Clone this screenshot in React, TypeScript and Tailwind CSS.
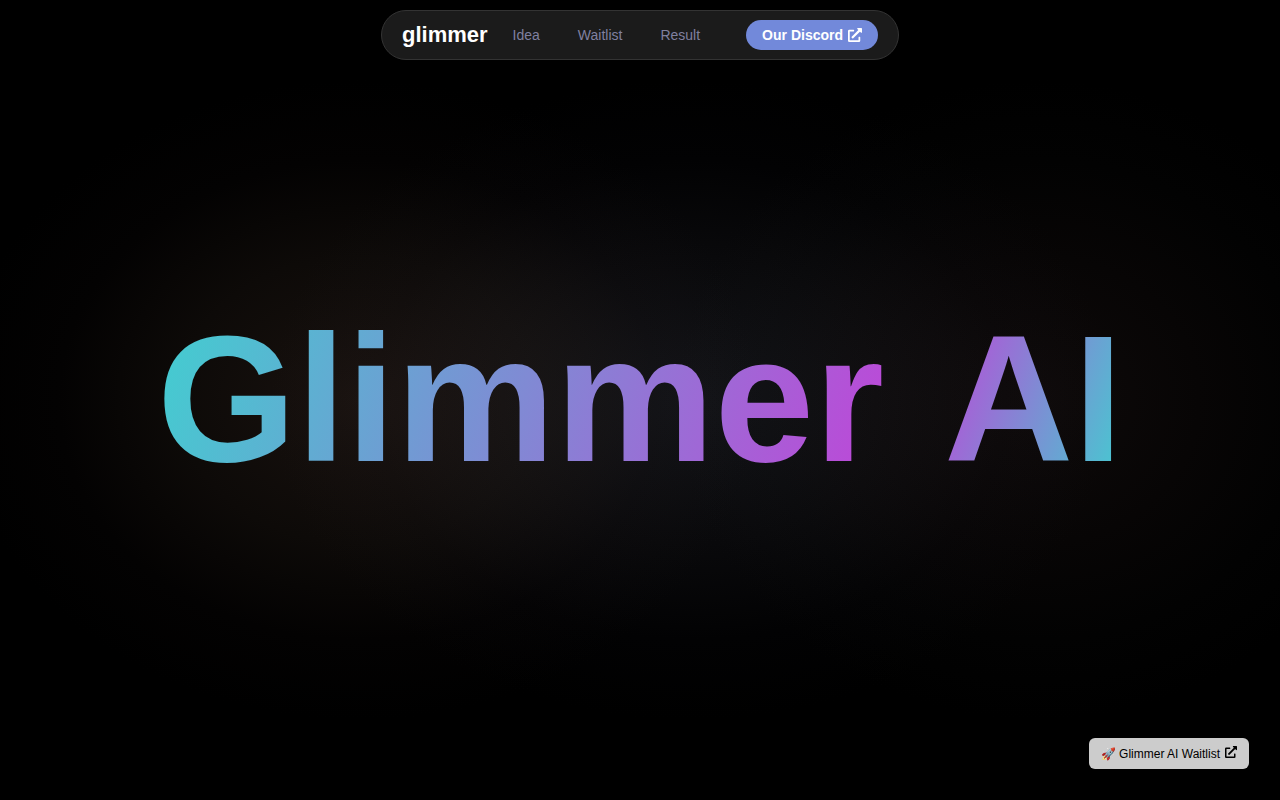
import { FaExternalLinkAlt } from "react-icons/fa";

const links = [
    { label: "Idea", href: "#idea" },
    { label: "Waitlist", href: "#waitlist" },
    { label: "Result", href: "#result" },
];

function Navbar() {
    return (
        <header className="flex justify-center pt-[10px]">
            <nav className="flex h-[50px] items-center rounded-full border border-[#333333] bg-[#1b1b1b] px-5">
                <a href="#" className="pb-0.5 text-[22px] font-bold text-white">
                    glimmer
                </a>
                <div className="ml-[25px] flex items-center gap-[38px]">
                    {links.map((link) => (
                        <a key={link.href} href={link.href} className="text-sm text-[#8080a0] hover:text-white">
                            {link.label}
                        </a>
                    ))}
                </div>
                <a
                    href="#discord"
                    className="ml-[46px] flex h-[30px] items-center gap-[5px] rounded-full bg-[#7289da] px-4 text-sm font-bold text-white"
                >
                    Our Discord
                    <FaExternalLinkAlt />
                </a>
            </nav>
        </header>
    );
}

function Hero() {
    return (
        <main className="flex flex-1 items-center justify-center pb-[62px]">
            <h1 className="flex gap-[60px] text-[14vw] leading-[206px] font-bold">
                <span className="bg-[linear-gradient(110deg,#40d0d0,#c044d8)] bg-clip-text text-transparent">
                    Glimmer
                </span>
                <span className="bg-[linear-gradient(110deg,#c044d8,#40d0d0)] bg-clip-text text-transparent">AI</span>
            </h1>
        </main>
    );
}

export default function App() {
    return (
        <div className="flex min-h-screen flex-col bg-black bg-[radial-gradient(400px_320px_at_28%_50%,#19120f,#0d0a08_45%,#030202_75%,transparent),radial-gradient(420px_320px_at_54%_50%,#121317,#09090b_45%,#020203_75%,transparent),radial-gradient(360px_320px_at_81%_50%,#0e0a0a,#070505_45%,#020202_75%,transparent)] bg-blend-screen font-['Liberation_Sans',Arial,sans-serif]">
            <Navbar />
            <Hero />
            <a
                href="#waitlist"
                className="fixed right-[31px] bottom-[31px] flex h-[31px] items-center gap-[5px] rounded-md bg-[#cccccc] px-3 text-xs text-black"
            >
                <span>🚀 Glimmer AI Waitlist</span>
                <FaExternalLinkAlt className="mb-1" />
            </a>
        </div>
    );
}
